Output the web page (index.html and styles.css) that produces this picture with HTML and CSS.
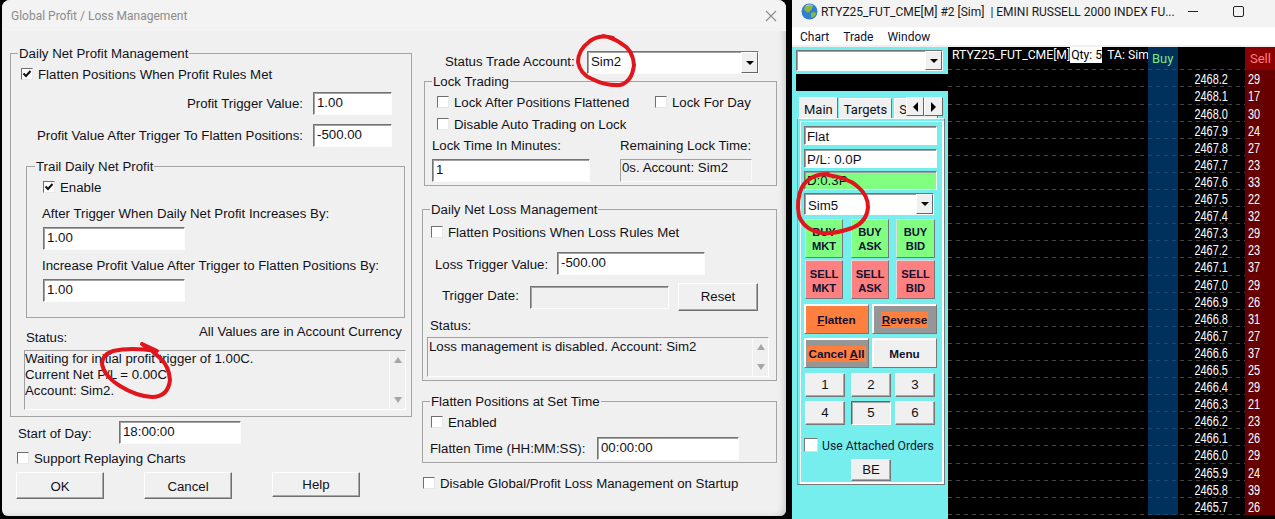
FILE: index.html
```html
<!DOCTYPE html>
<html lang="en">
<head>
<meta charset="utf-8">
<title>Global Profit / Loss Management</title>
<link rel="stylesheet" href="styles.css">
</head>
<body>
<section class="dialog">
  <header class="dlg-title">
    <span>Global Profit / Loss Management</span>
    <svg class="dlg-close" width="12" height="12" viewBox="0 0 12 12"><path d="M1 1L11 11M11 1L1 11" stroke="#8c8c8c" stroke-width="1.1" fill="none"/></svg>
  </header>
  <div class="dlg-body">
    <div class="col-left">
      <fieldset class="group profit">
        <legend>Daily Net Profit Management</legend>
        <label class="check c-flatten"><span class="box"><svg width="10" height="10" viewBox="0 0 10 10"><path d="M1.5 4.5L4 7L8.5 2" stroke="#111" stroke-width="2" fill="none"/></svg></span>Flatten Positions When Profit Rules Met</label>
        <div class="right-row r-a"><span>Profit Trigger Value:</span><div class="field f78">1.00</div></div>
        <div class="right-row r-b"><span>Profit Value After Trigger To Flatten Positions:</span><div class="field f78">-500.00</div></div>
        <fieldset class="group trail">
          <legend>Trail Daily Net Profit</legend>
          <label class="check c-enable"><span class="box"><svg width="10" height="10" viewBox="0 0 10 10"><path d="M1.5 4.5L4 7L8.5 2" stroke="#111" stroke-width="2" fill="none"/></svg></span>Enable</label>
          <div class="text t-after">After Trigger When Daily Net Profit Increases By:</div>
          <div class="field f142 fmt">1.00</div>
          <div class="text t-inc">Increase Profit Value After Trigger to Flatten Positions By:</div>
          <div class="field f142 fmt">1.00</div>
        </fieldset>
        <div class="status-head"><span>Status:</span><span class="all-values">All Values are in Account Currency</span></div>
        <div class="memo memo-profit">
          <div class="memo-text">Waiting for initial profit trigger of 1.00C.<br>Current Net P/L = 0.00C.<br>Account: Sim2.</div>
          <div class="scroll"><i class="up"></i><i class="down"></i></div>
        </div>
      </fieldset>
      <div class="start-row"><span class="start-label">Start of Day:</span><div class="field f122">18:00:00</div></div>
      <label class="check c-support"><span class="box"></span>Support Replaying Charts</label>
      <div class="dlg-buttons">
        <div class="btn b-ok">OK</div>
        <div class="btn b-ok">Cancel</div>
        <div class="btn b-help">Help</div>
      </div>
    </div>
    <div class="col-right">
      <div class="account-row">
        <span class="acct-label">Status Trade Account:</span>
        <div class="field combo f171">Sim2<span class="drop"><i></i></span></div>
      </div>
      <fieldset class="group lock">
        <legend>Lock Trading</legend>
        <div class="lock-top">
          <label class="check"><span class="box"></span>Lock After Positions Flattened</label>
          <label class="check"><span class="box"></span>Lock For Day</label>
        </div>
        <label class="check c-disable"><span class="box"></span>Disable Auto Trading on Lock</label>
        <div class="lock-cols">
          <div class="lock-col"><div class="text">Lock Time In Minutes:</div><div class="field f158 fmt6">1</div></div>
          <div><div class="text">Remaining Lock Time:</div><div class="memo-flat fmt6">0s. Account: Sim2</div></div>
        </div>
      </fieldset>
      <fieldset class="group loss">
        <legend>Daily Net Loss Management</legend>
        <label class="check c-lossflat"><span class="box"></span>Flatten Positions When Loss Rules Met</label>
        <div class="loss-trigger"><span class="lt-label">Loss Trigger Value:</span><div class="field f148">-500.00</div></div>
        <div class="loss-date"><span class="ld-label">Trigger Date:</span><div class="field f139 disabled"></div><div class="btn b-reset">Reset</div></div>
        <div class="text t-lstatus">Status:</div>
        <div class="memo memo-loss">
          <div class="memo-text">Loss management is disabled. Account: Sim2</div>
          <div class="scroll"><i class="up"></i><i class="down"></i></div>
        </div>
      </fieldset>
      <fieldset class="group settime">
        <legend>Flatten Positions at Set Time</legend>
        <label class="check c-enabled"><span class="box"></span>Enabled</label>
        <div class="set-row"><span class="st-label">Flatten Time (HH:MM:SS):</span><div class="field f142">00:00:00</div></div>
      </fieldset>
      <label class="check c-startup"><span class="box"></span>Disable Global/Profit Loss Management on Startup</label>
    </div>
  </div>
</section>

<section class="dom">
  <header class="dom-title">
    <svg class="globe" width="17" height="17" viewBox="0 0 17 17">
      <circle cx="8.5" cy="8.5" r="8" fill="#2f7fd0"/>
      <path d="M4 3.5C7 1 11 2 12 4C10 6 11 7 9 8C8 10 6 10 5 8C3 8 3 5 4 3.5ZM10 10C12 9 15 9 15 11C14 14 11 15 10 14Z" fill="#8fb838"/>
      <path d="M5 3C7 1.5 10 1.5 12 3" stroke="#fff" stroke-width="1" fill="none" opacity=".6"/>
    </svg>
    <span class="dom-name">RTYZ25_FUT_CME[M] #2 [Sim]&nbsp; | EMINI RUSSELL 2000 INDEX FU...</span>
    <div class="win-ctrl">
      <svg width="10" height="2" viewBox="0 0 10 2"><rect width="10" height="1" fill="#222"/></svg>
      <svg width="11" height="11" viewBox="0 0 11 11"><rect x=".5" y=".5" width="10" height="10" rx="1.5" fill="none" stroke="#222"/></svg>
    </div>
  </header>
  <nav class="dom-menu"><span>Chart</span><span>Trade</span><span>Window</span></nav>
  <div class="dom-body">
    <aside class="side">
      <div class="field combo side-top"><span class="drop"><i></i></span></div>
      <div class="side-black"></div>
      <div class="tabs">
        <span class="tab active">Main</span><span class="tab">Targets</span><span class="tab clip">S</span>
        <div class="tab-nav">
          <span class="tab-arrow"><i class="tri-l"></i></span><span class="tab-arrow"><i class="tri-r"></i></span>
        </div>
      </div>
      <div class="panel">
        <div class="field info">Flat</div>
        <div class="field info gap4">P/L: 0.0P</div>
        <div class="field info gap4 green">D:0.3P</div>
        <div class="field combo side-acct">Sim5<span class="drop"><i></i></span></div>
        <div class="trade-row tr-buy">
          <div class="tbtn buy">BUY<br>MKT</div><div class="tbtn buy">BUY<br>ASK</div><div class="tbtn buy">BUY<br>BID</div>
        </div>
        <div class="trade-row tr-sell">
          <div class="tbtn sell">SELL<br>MKT</div><div class="tbtn sell">SELL<br>ASK</div><div class="tbtn sell">SELL<br>BID</div>
        </div>
        <div class="big-row br1">
          <div class="bbtn orange"><span><u>F</u>latten</span></div>
          <div class="bbtn grey"><span><u>R</u>everse</span></div>
        </div>
        <div class="big-row br2">
          <div class="bbtn grey"><span>Cancel <u>A</u>ll</span></div>
          <div class="bbtn plain"><span>Menu</span></div>
        </div>
        <div class="num-row n1"><div class="nbtn">1</div><div class="nbtn">2</div><div class="nbtn">3</div></div>
        <div class="num-row n2"><div class="nbtn">4</div><div class="nbtn pressed">5</div><div class="nbtn">6</div></div>
        <label class="check side-check"><span class="box box13"></span>Use Attached Orders</label>
        <div class="nbtn be">BE</div>
      </div>
    </aside>
    <div class="ladder">
      <div class="row head">
        <div class="c-chart"><span class="sym">RTYZ25_FUT_CME[M]</span><span class="qty">Qty: 5</span><span class="ta">TA: Sim</span></div>
        <div class="c-buy buy-h">Buy</div><div class="c-price"></div><div class="c-sell sell-h">Sell</div>
      </div>
      <div class="row"><div class="c-chart"></div><div class="c-buy"></div><div class="c-price"><span>2468.2</span></div><div class="c-sell"><span>29</span></div></div>
      <div class="row"><div class="c-chart"></div><div class="c-buy"></div><div class="c-price"><span>2468.1</span></div><div class="c-sell"><span>17</span></div></div>
      <div class="row"><div class="c-chart"></div><div class="c-buy"></div><div class="c-price"><span>2468.0</span></div><div class="c-sell"><span>30</span></div></div>
      <div class="row"><div class="c-chart"></div><div class="c-buy"></div><div class="c-price"><span>2467.9</span></div><div class="c-sell"><span>24</span></div></div>
      <div class="row"><div class="c-chart"></div><div class="c-buy"></div><div class="c-price"><span>2467.8</span></div><div class="c-sell"><span>27</span></div></div>
      <div class="row"><div class="c-chart"></div><div class="c-buy"></div><div class="c-price"><span>2467.7</span></div><div class="c-sell"><span>23</span></div></div>
      <div class="row"><div class="c-chart"></div><div class="c-buy"></div><div class="c-price"><span>2467.6</span></div><div class="c-sell"><span>33</span></div></div>
      <div class="row"><div class="c-chart"></div><div class="c-buy"></div><div class="c-price"><span>2467.5</span></div><div class="c-sell"><span>22</span></div></div>
      <div class="row"><div class="c-chart"></div><div class="c-buy"></div><div class="c-price"><span>2467.4</span></div><div class="c-sell"><span>32</span></div></div>
      <div class="row"><div class="c-chart"></div><div class="c-buy"></div><div class="c-price"><span>2467.3</span></div><div class="c-sell"><span>29</span></div></div>
      <div class="row"><div class="c-chart"></div><div class="c-buy"></div><div class="c-price"><span>2467.2</span></div><div class="c-sell"><span>23</span></div></div>
      <div class="row"><div class="c-chart"></div><div class="c-buy"></div><div class="c-price"><span>2467.1</span></div><div class="c-sell"><span>37</span></div></div>
      <div class="row"><div class="c-chart"></div><div class="c-buy"></div><div class="c-price"><span>2467.0</span></div><div class="c-sell"><span>29</span></div></div>
      <div class="row"><div class="c-chart"></div><div class="c-buy"></div><div class="c-price"><span>2466.9</span></div><div class="c-sell"><span>26</span></div></div>
      <div class="row"><div class="c-chart"></div><div class="c-buy"></div><div class="c-price"><span>2466.8</span></div><div class="c-sell"><span>31</span></div></div>
      <div class="row"><div class="c-chart"></div><div class="c-buy"></div><div class="c-price"><span>2466.7</span></div><div class="c-sell"><span>27</span></div></div>
      <div class="row"><div class="c-chart"></div><div class="c-buy"></div><div class="c-price"><span>2466.6</span></div><div class="c-sell"><span>37</span></div></div>
      <div class="row"><div class="c-chart"></div><div class="c-buy"></div><div class="c-price"><span>2466.5</span></div><div class="c-sell"><span>25</span></div></div>
      <div class="row"><div class="c-chart"></div><div class="c-buy"></div><div class="c-price"><span>2466.4</span></div><div class="c-sell"><span>29</span></div></div>
      <div class="row"><div class="c-chart"></div><div class="c-buy"></div><div class="c-price"><span>2466.3</span></div><div class="c-sell"><span>21</span></div></div>
      <div class="row"><div class="c-chart"></div><div class="c-buy"></div><div class="c-price"><span>2466.2</span></div><div class="c-sell"><span>23</span></div></div>
      <div class="row"><div class="c-chart"></div><div class="c-buy"></div><div class="c-price"><span>2466.1</span></div><div class="c-sell"><span>26</span></div></div>
      <div class="row"><div class="c-chart"></div><div class="c-buy"></div><div class="c-price"><span>2466.0</span></div><div class="c-sell"><span>29</span></div></div>
      <div class="row"><div class="c-chart"></div><div class="c-buy"></div><div class="c-price"><span>2465.9</span></div><div class="c-sell"><span>24</span></div></div>
      <div class="row"><div class="c-chart"></div><div class="c-buy"></div><div class="c-price"><span>2465.8</span></div><div class="c-sell"><span>39</span></div></div>
      <div class="row"><div class="c-chart"></div><div class="c-buy"></div><div class="c-price"><span>2465.7</span></div><div class="c-sell"><span>26</span></div></div>
    </div>
  </div>
</section>

<svg class="marks" width="1275" height="519" viewBox="0 0 1275 519">
  <g fill="none" stroke="#e1161c" stroke-width="4" stroke-linecap="round" stroke-linejoin="round">
    <path d="M613 38Q600 34 590 41Q578 50 578 62Q580 74 592 79Q606 86 620 85Q632 82 634 65Q633 50 622 44Q612 37 603 36"/>
    <path d="M142 344L157 351Q130 347 113 351Q102 355 102 364Q104 376 120 386Q136 396 152 397Q168 397 170 380Q169 366 160 358Q152 350 142 344"/>
    <path d="M828 175Q848 178 857 186Q868 195 868 207Q867 222 852 228Q835 234 823 233Q805 231 799 216Q796 200 802 187Q810 174 828 174"/>
  </g>
</svg>
</body>
</html>
```
FILE: styles.css
```css
* { box-sizing: border-box; }
html, body { margin: 0; padding: 0; height: 100%; }
body {
  background: #000;
  width: 1275px; height: 519px;
  overflow: hidden;
  position: relative;
  font: 13.25px/16px "Liberation Sans", Arial, sans-serif;
  color: #101018;
}
label { display: flex; align-items: center; }
i { display: block; }

/* Dialog window */
.dialog {
  position: absolute; left: 2px; top: 0;
  width: 784px; height: 516px;
  background: #f0f0f0;
  border-radius: 8px 8px 6px 6px;
  box-shadow: inset -6px -3px 6px -4px #c8c8c8;
  overflow: hidden;
}
.dlg-title {
  height: 31px;
  background: #f3f3f3;
  display: flex; align-items: center; justify-content: space-between;
  padding: 0 9px 0 9px;
  font: 12px/16px Roboto, "Noto Sans", sans-serif;
  color: #8b8b8b;
}
.dlg-body { display: flex; gap: 10px; padding: 14px 0 0 8px; }
.col-left { width: 402px; display: flex; flex-direction: column; }
.col-right { width: 355px; display: flex; flex-direction: column; padding-top: 6px; }

/* Group boxes */
.group { margin: 0; padding: 0; border: 1px solid #a3a3a3; min-width: 0; }
.group legend { padding: 0 1px; margin-left: 7px; line-height: 16px; transform: translateY(1px); }
.profit { padding-bottom: 9px; height: 372px; }
.trail { margin: 11px 6px 0 15px; padding: 0 0 15px 16px; height: 160px; }
.trail legend { margin-left: -8px; }

.check { gap: 5px; height: 16px; padding-top: 2px; }
.box {
  flex: none; width: 12px; height: 12px; margin-top: -2px;
  background: #fff;
  border: 1px solid; border-color: #6f6f6f #e8e8e8 #e8e8e8 #6f6f6f;
  display: flex; align-items: center; justify-content: center;
}
.box13 { width: 14px; height: 14px; border-color: #777 #ddd #ddd #777; }

.field {
  height: 23px;
  background: #fff;
  border: 1px solid; border-color: #747474 #fcfcfc #fcfcfc #747474;
  box-shadow: inset 1px 1px 0 #a2a2a2;
  padding: 1px 0 0 3px;
  line-height: 17px;
  white-space: nowrap;
}
.disabled { background: #f0f0f0; }
.f78 { width: 79px; }
.f122 { width: 122px; }
.f142 { width: 142px; }
.f148 { width: 148px; }
.f139 { width: 139px; }
.f158 { width: 158px; }
.f171 { width: 172px; }

.c-flatten { margin: 5px 0 0 10px; }
.right-row { display: flex; align-items: center; justify-content: flex-end; gap: 10px; padding-right: 19px; }
.r-a { margin-top: 10px; }
.r-b { margin-top: 9px; }
.c-enable { margin-top: 5px; }
.text { line-height: 16px; }
.t-after { margin: 11px 0 0 -1px; }
.t-inc { margin: 8px 0 0 -1px; white-space: nowrap; }
.fmt { margin-top: 5px; }
.fmt6 { margin-top: 5px; }
.lock-cols .text { padding-top: 1px; height: 17px; }

.status-head { display: flex; align-items: flex-end; justify-content: space-between; height: 22px; margin-top: 6px; padding: 0 9px 0 15px; }
.all-values { align-self: flex-start; }
.memo {
  display: flex;
  border: 1px solid; border-color: #a0a0a0 #fff #fff #a0a0a0;
  background: #f0f0f0;
}
.memo-profit { margin: 4px 5px 0 13px; height: 60px; }
.memo-loss { margin: 3px 7px 0 4px; height: 40px; }
.memo-text { flex: 1; line-height: 16px; }
.memo-loss .memo-text { padding: 1px 0 0 1px; }
.scroll {
  width: 16px; flex: none;
  border-left: 1px solid #fafafa;
  display: flex; flex-direction: column; justify-content: space-between; align-items: center;
  padding: 6px 0;
}
.up { width: 0; height: 0; border: 4.5px solid transparent; border-top: 0; border-bottom: 6px solid #a6a6a6; }
.down { width: 0; height: 0; border: 4.5px solid transparent; border-bottom: 0; border-top: 6px solid #a6a6a6; }

.start-row { display: flex; align-items: center; margin: 4px 0 0 8px; }
.start-label { width: 101px; padding-top: 2px; }
.c-support { margin: 6px 0 0 7px; }
.dlg-buttons { display: flex; gap: 40px; margin: 6px 0 0 6px; }
.btn {
  display: flex; align-items: center; justify-content: center;
  background: #f0f0f0;
  border: 1px solid; border-color: #fff #6f6f6f #6f6f6f #fff;
  box-shadow: inset -1px -1px 0 #a8a8a8;
}
.b-ok { width: 88px; height: 27px; padding-top: 2px; }
.b-help { width: 88px; height: 25px; }
.b-reset { width: 80px; height: 28px; margin-left: 9px; }

/* Right column of dialog */
.account-row { display: flex; align-items: center; height: 23px; padding-left: 23px; }
.acct-label { width: 142px; padding-bottom: 2px; }
.combo { position: relative; }
.drop {
  position: absolute; right: 0; top: 0; bottom: 0; width: 17px;
  background: #f0f0f0;
  border: 1px solid; border-color: #fff #666 #666 #fff;
  display: flex; align-items: center; justify-content: center;
}
.drop i { width: 0; height: 0; border: 4px solid transparent; border-bottom: 0; border-top: 4px solid #000; }
.lock { margin: -1px 0 0 2px; height: 113px; }
.lock-top { display: grid; grid-template-columns: 218px auto; margin: 5px 0 0 12px; }
.c-disable { margin: 6px 0 0 12px; }
.lock-cols { display: flex; margin: 5px 0 0 7px; }
.lock-col { width: 188px; }
.memo-flat {
  width: 132px; height: 23px;
  border: 1px solid; border-color: #a0a0a0 #fafafa #fafafa #a0a0a0;
  padding: 0 0 0 1px; line-height: 16px;
}
.loss { margin-top: 15px; height: 180px; }
.c-lossflat { margin: 7px 0 0 8px; }
.loss-trigger { display: flex; align-items: center; margin: 12px 0 0 12px; }
.lt-label { width: 122px; padding-top: 2px; }
.loss-date { display: flex; align-items: center; margin: 8px 0 0 19px; height: 28px; }
.ld-label { width: 88px; padding-bottom: 2px; }
.t-lstatus { margin: 6px 0 0 7px; padding-top: 1px; height: 17px; }
.settime { margin-top: 12px; height: 70px; }
.c-enabled { margin: 5px 0 0 8px; }
.set-row { display: flex; align-items: center; margin: 7px 0 0 7px; }
.st-label { width: 167px; }
.c-startup { margin: 12px 0 0 1px; }

/* DOM window */
.dom {
  position: absolute; left: 792px; top: 0;
  width: 483px; height: 519px;
  display: flex; flex-direction: column;
}
.dom-title {
  height: 27px; flex: none;
  background: #f3f3f3;
  display: flex; align-items: center;
  padding: 0 0 4px 9px;
  font: 12px/16px Roboto, "Noto Sans", sans-serif;
  color: #1a1a1a;
}
.globe { flex: none; margin-right: 3px; }
.dom-name { white-space: nowrap; width: 367px; flex: none; overflow: hidden; }
.win-ctrl { display: flex; align-items: center; gap: 35px; flex: none; }
.dom-menu {
  height: 20px; flex: none;
  background: #fff;
  border-bottom: 2px solid #f0f0f0;
  display: flex; gap: 14px;
  padding: 2px 0 0 8px;
  font: 12px/16px Roboto, "Noto Sans", sans-serif;
  color: #101030;
}
.dom-body { flex: 1; display: flex; min-height: 0; }

.side { width: 156px; flex: none; background: #76eeee; padding-top: 3px; }
.side-top { width: 147px; height: 21px; margin-left: 4px; }
.side-black { height: 17px; margin: 3px 0 0 4px; background: #000; }
.tabs { position: relative; display: flex; height: 21px; margin: 6px 0 0 7px; width: 144px; align-items: flex-end; overflow: hidden; font: 13px/16px Roboto, "Noto Sans", sans-serif; }
.tab {
  background: #f0f0f0;
  border: 1px solid; border-color: #fff #777 transparent #fff;
  border-bottom: 0;
  height: 20px; padding: 3px 4px 0;
  margin-right: 2px;
}
.active { height: 21px; padding: 4px 4px 0; margin-right: 1px; }
.clip { padding-right: 30px; }
.tab-nav { position: absolute; right: 0; top: 0; display: flex; }
.tab-arrow {
  width: 18px; height: 19px;
  background: #f0f0f0;
  border: 1px solid; border-color: #fff #666 #666 #fff;
  display: flex; align-items: center; justify-content: center;
}
.tab-arrow + .tab-arrow { width: 19px; }
.tri-l { width: 0; height: 0; border: 5px solid transparent; border-left: 0; border-right: 5px solid #000; }
.tri-r { width: 0; height: 0; border: 5px solid transparent; border-right: 0; border-left: 5px solid #000; }

.panel {
  width: 148px; height: 367px; margin-left: 5px;
  border: 1px solid; border-color: #fff #777 #777 #999;
  box-shadow: inset 2px 2px 0 #76eeee, inset 3px 3px 0 #fff, inset -2px -2px 0 #fff;
  padding: 7px 0 0 6px;
  display: flex; flex-direction: column;
}
.info { width: 133px; height: 19px; padding: 2px 0 0 2px; line-height: 16px; }
.gap4 { margin-top: 4px; }
.green { background: #80ff80; margin-top: 3px; padding-top: 1px; }
.side-acct { width: 130px; height: 22px; margin-top: 3px; padding: 3px 0 0 3px; line-height: 17px; }
.trade-row { display: grid; margin-left: 1px; grid-template-columns: 46px 45px 39px; font: 700 11.2px/14px "Liberation Sans", Arial, sans-serif; text-align: center; }
.tr-buy { margin-top: 4px; }
.tr-sell { margin-top: 2px; }
.tbtn {
  height: 39px;
  border: 1px solid; border-color: #ddd #777 #777 #ddd;
  padding-top: 5px;
  color: #101030;
}
.tr-sell .tbtn { padding-top: 6px; }
.tbtn:nth-child(-n+2) { width: 38px; }
.buy { background: #80ff80; }
.sell { background: #ff8080; }
.big-row { display: grid; grid-template-columns: 65px 65px; gap: 3px; font: 700 11.7px/16px "Liberation Sans", Arial, sans-serif; }
.br1 { margin-top: 5px; }
.br2 { margin-top: 4px; }
.bbtn {
  height: 30px; padding-top: 2px;
  border: 1px solid; border-color: #fff #777 #777 #fff;
  box-shadow: inset 1px 1px 0 #fff;
  display: flex; align-items: center; justify-content: center;
  white-space: nowrap; color: #101030;
}
.orange { background: #ff7f3f; }
.grey { background: #969696; }
.grey span { background: #ff7f3f; padding: 0 1px; }
.plain { background: #f0f0f0; }
.num-row { display: grid; grid-template-columns: 46px 44px 40px; margin-left: 1px; }
.n1 { margin-top: 5px; }
.n2 { margin-top: 4px; }
.nbtn {
  width: 40px; height: 24px;
  background: #f0f0f0;
  border: 1px solid; border-color: #fff #777 #777 #fff;
  box-shadow: inset -1px -1px 0 #a8a8a8;
  display: flex; align-items: center; justify-content: center;
}
.pressed { border-color: #666 #fff #fff #666; box-shadow: inset 1px 1px 0 #a8a8a8; }
.side-check { margin-top: 12px; gap: 4px; font: 12.2px/16px Roboto, "Noto Sans", sans-serif; white-space: nowrap; color: #102030; }
.be { height: 22px; margin: 6px 0 0 47px; }

/* Ladder */
.ladder { flex: 1; background: #000; min-width: 0; }
.row {
  display: grid; grid-template-columns: 200px 30px 67px 30px;
  height: 17.1px;
  background: repeating-linear-gradient(90deg, #454545 0 4px, transparent 4px 8px) left bottom / 100% 1px no-repeat;
  font: 14px/16px "Liberation Sans", sans-serif;
  color: #fff;
}
.head { height: 23.4px; font: 12.2px/16px Roboto, "Noto Sans", sans-serif; }
.c-chart { display: flex; padding-left: 4px; white-space: nowrap; overflow: hidden; margin-bottom: 1px; }
.c-buy { background: repeating-linear-gradient(90deg, #1d4a6e 0 4px, transparent 4px 8px) left bottom / 100% 1px no-repeat #00305c; }
.c-price { text-align: right; padding: 1px 17px 0 0; }
.c-price span { display: inline-block; transform: scaleX(.78); transform-origin: right center; }
.c-sell { background: #660000; padding: 1px 0 0 3px; }
.c-sell span { display: inline-block; transform: scaleX(.78); transform-origin: left center; }
.sym { width: 120px; }
.qty { background: #fff; color: #000; width: 33px; height: 16px; padding-left: 1px; }
.ta { margin-left: 5px; }
.buy-h { color: #7fe87f; padding: 4px 0 0 4px; font-size: 13px; }
.sell-h { background: #8b0000; color: #ff7f7f; padding: 4px 0 0 5px; font-size: 13px; }

.marks { position: absolute; left: 0; top: 0; pointer-events: none; }
```
